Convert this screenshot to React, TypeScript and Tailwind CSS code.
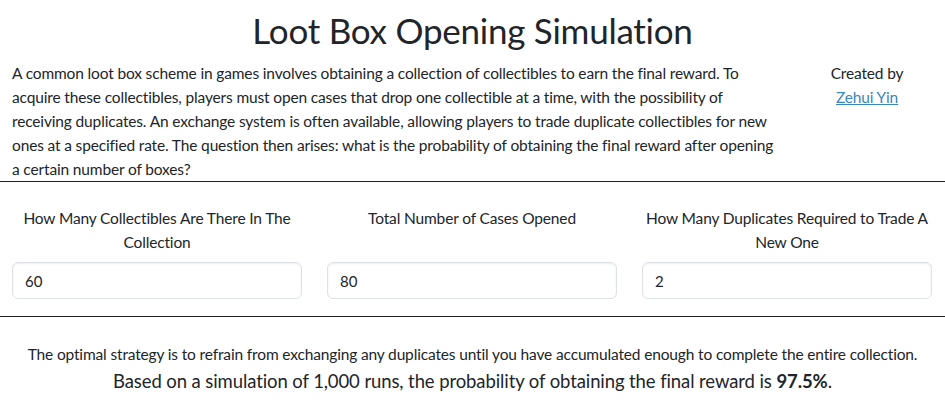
import React, { useState } from "react";

const fields = [
  { label: "How Many Collectibles Are There In The Collection", value: "60" },
  { label: "Total Number of Cases Opened", value: "80" },
  { label: "How Many Duplicates Required to Trade A New One", value: "2" },
];

export default function App() {
  const [values, setValues] = useState(fields.map((f) => f.value));

  return (
    <div
      className="min-h-screen bg-white text-[#212529]"
      style={{ fontFamily: "Lato, 'Open Sans', sans-serif" }}
    >
      <h1 className="pt-[9px] text-center text-[35px] leading-[43px] font-normal tracking-[-0.25px]">
        Loot Box Opening Simulation
      </h1>

      <div className="mt-[9px] flex text-[15.5px] leading-[24px] tracking-[-0.15px]">
        <p className="ml-[12px] w-[770px]">
          A common loot box scheme in games involves obtaining a collection of
          collectibles to earn the final reward. To acquire these collectibles,
          players must open cases that drop one collectible at a time, with the
          possibility of receiving duplicates. An exchange system is often
          available, allowing players to trade duplicate collectibles for new
          ones at a specified rate. The question then arises: what is the
          probability of obtaining the final reward after opening a certain
          number of boxes?
        </p>
        <div className="ml-[10px] w-[150px] text-center">
          <div>Created by</div>
          <a href="#" className="text-[#3a87ba] underline">
            Zehui Yin
          </a>
        </div>
      </div>

      <hr className="border-t border-[#222]" />

      <div className="mt-[24px] flex gap-[25px] px-[12px]">
        {fields.map((f, i) => (
          <div key={f.label} className="flex w-[290px] flex-col">
            <label className="flex h-[48px] items-start justify-center px-[4px] text-center text-[15.5px] leading-[24px] tracking-[-0.15px]">
              {f.label}
            </label>
            <input
              type="number"
              value={values[i]}
              onChange={(e) =>
                setValues(values.map((v, j) => (j === i ? e.target.value : v)))
              }
              className="mt-[8px] h-[37px] w-full rounded-[6px] border border-[#dee2e6] px-[12px] text-[15px] shadow-[inset_0_1px_2px_rgba(0,0,0,0.075)] outline-none"
            />
          </div>
        ))}
      </div>

      <hr className="mt-[17px] border-t border-[#222]" />

      <div className="mt-[25px] text-center">
        <p className="text-[15.5px] leading-[24px] tracking-[-0.15px]">
          The optimal strategy is to refrain from exchanging any duplicates
          until you have accumulated enough to complete the entire collection.
        </p>
        <p className="mt-[2px] text-[18.5px] leading-[27px] tracking-[-0.1px]">
          Based on a simulation of 1,000 runs, the probability of obtaining the
          final reward is <strong>97.5%</strong>.
        </p>
      </div>
    </div>
  );
}
